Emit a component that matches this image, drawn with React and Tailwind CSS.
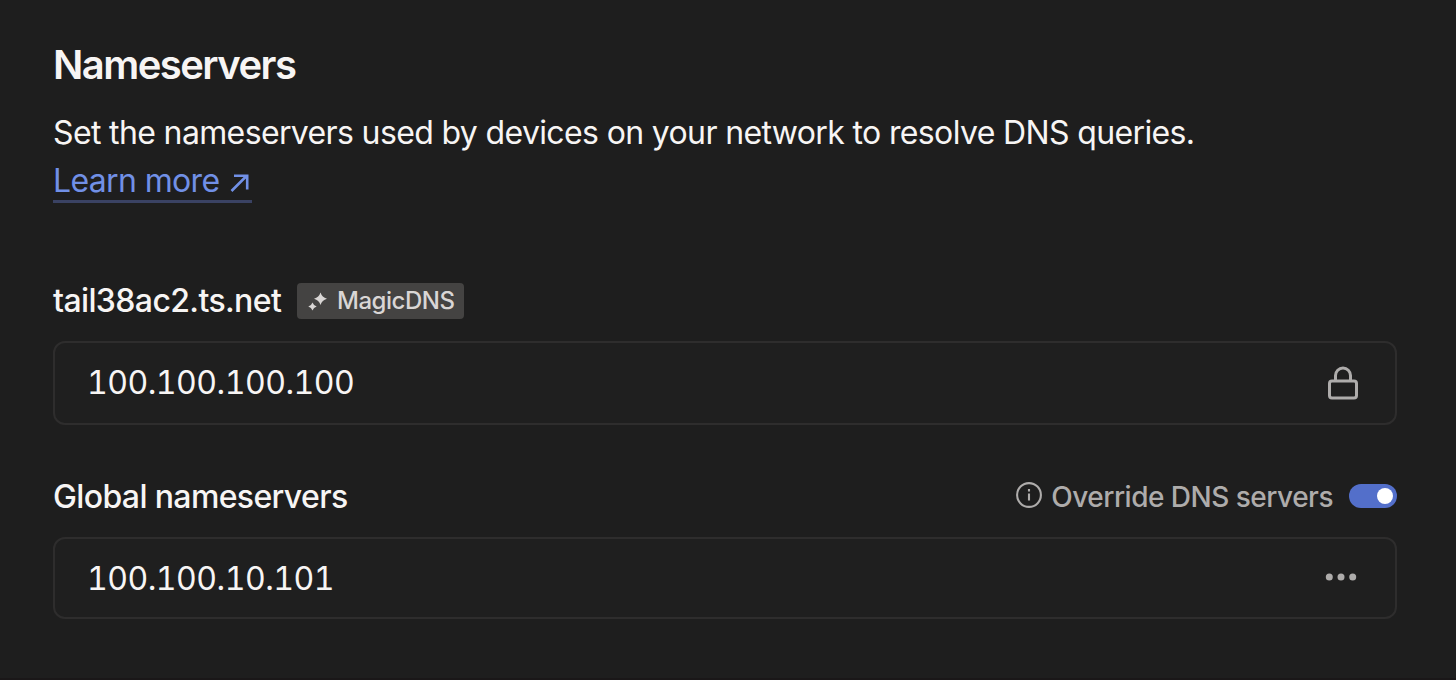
function Row({ children, className }) {
  return (
    <div className={`flex items-center justify-between rounded-[12px] border-2 border-[#2e2d2d] bg-[#1f1f1f] pl-[32px] ${className}`}>
      {children}
    </div>
  );
}

export default function App() {
  return (
    <main className="h-[680px] w-[1456px] overflow-hidden border-b-2 border-[#1a1718] bg-[#1e1e1e] pl-[53px] pr-[59px] pt-[41px] font-['Inter',sans-serif] text-[#f7f5f4]">
      <h1 className="h-12 whitespace-nowrap text-[40px] font-semibold leading-[48px] tracking-[-1.55px]">
        Nameservers
      </h1>
      <p className="mt-5 h-12 whitespace-nowrap text-[32px] leading-[48px] tracking-[-0.635px]">
        Set the nameservers used by devices on your network to resolve DNS queries.
      </p>
      <div className="flex h-12 items-start">
        <a className="flex h-[46px] w-[199px] items-start justify-between whitespace-nowrap border-b-[3px] border-[#3a4263] pr-[2px] text-[32px] leading-[48px] tracking-[-0.64px] text-[#7190e6]">
          <span>Learn more</span>
          <svg className="mt-[16px] h-[20px] w-[20px]" viewBox="0 0 20 20" fill="none" stroke="currentColor" strokeWidth="2.6">
            <path d="M1.500 18 17 2.500M4 2.800h13.200v13.700" />
          </svg>
        </a>
      </div>
      <div className="mt-[72px] flex h-12 items-center">
        <h2 className="w-[244px] whitespace-nowrap text-[32px] font-medium leading-[48px] tracking-[-0.62px]">tail38ac2.ts.net</h2>
        <div className="flex h-9 w-[167px] items-center gap-2 rounded-[4px] bg-[#444342] pl-[11px] text-[24px] font-medium tracking-[-0.48px] text-[#d9d6d5]">
          <svg className="h-[21px] w-[21px] shrink-0" viewBox="0 0 21 21" fill="currentColor">
            <path d="M12.500 1.500Q14 6.300 19 7.800Q14 9.300 12.500 14.100Q11 9.300 6 7.800Q11 6.300 12.500 1.500Z" />
            <path d="M4.500 11.500Q5.500 14.500 8.700 15.500Q5.500 16.500 4.500 19.500Q3.500 16.500 .3 15.500Q3.500 14.500 4.500 11.500Z" />
          </svg>
          <span>MagicDNS</span>
        </div>
      </div>
      <Row className="mt-4 h-[84px] pr-[36px]">
        <span className="text-[32px] tabular-nums tracking-[-0.5px]">100.100.100.100</span>
        <svg className="h-[34px] w-[32px]" viewBox="0 0 32 34" fill="none" stroke="#aeacab" strokeWidth="3">
          <rect x="2.500" y="15" width="27" height="17" rx="2.500" />
          <path d="M8.500 15V9.500a7.500 7.500 0 0 1 15 0V15" />
        </svg>
      </Row>
      <div className="mt-12 flex h-12 items-center justify-between">
        <h2 className="text-[32px] font-medium leading-[48px] tracking-[-0.635px]">Global nameservers</h2>
        <div className="flex items-center text-[28px] font-medium text-[#aeacab]">
          <svg className="mb-[4px] mr-[9px] h-[26px] w-[26px]" viewBox="0 0 26 26" fill="none" stroke="currentColor" strokeWidth="2.1">
            <circle cx="13" cy="13" r="11.900" />
            <path d="M13 11.500v7M13 7v2.400" />
          </svg>
          <span className="tracking-[-0.5px]">Override DNS servers</span>
          <span className="mb-[2px] ml-4 flex h-6 w-12 items-center justify-end rounded-full bg-[#536fca] pr-1">
            <span className="h-4 w-4 rounded-full bg-white" />
          </span>
        </div>
      </div>
      <Row className="mt-4 h-[82px] pr-[38px]">
        <span className="mt-[2px] text-[32px] tabular-nums tracking-[-0.5px]">100.100.10.101</span>
        <svg className="mb-[2px] h-[8px] w-[32px]" viewBox="0 0 32 8" fill="#aeacab">
          <circle cx="4.300" cy="4" r="3.500" /><circle cx="16" cy="4" r="3.500" /><circle cx="27.700" cy="4" r="3.500" />
        </svg>
      </Row>
    </main>
  );
}
